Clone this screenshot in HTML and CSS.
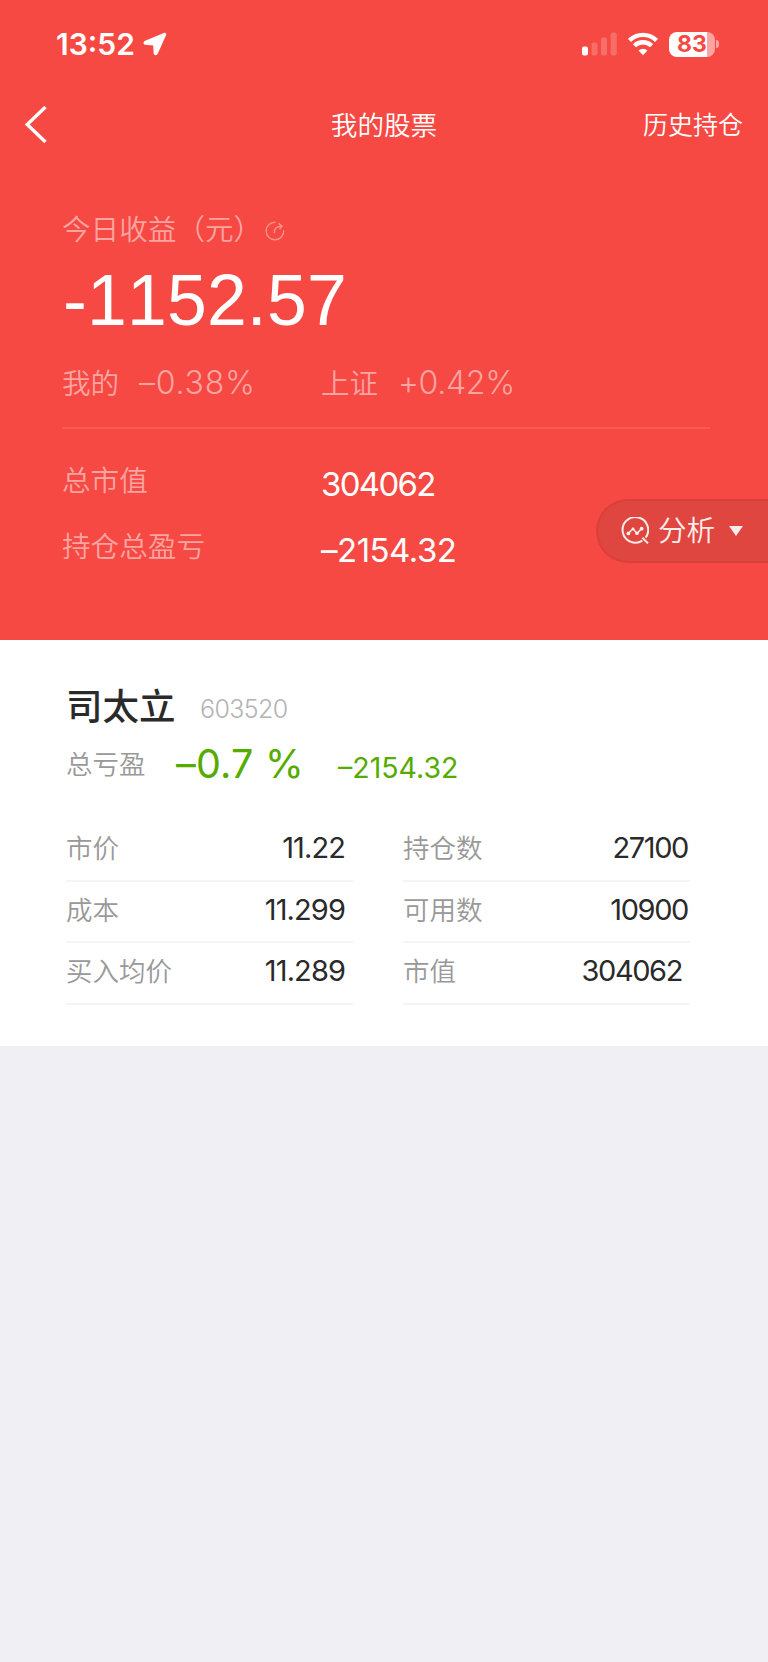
FILE: index.html
```html
<!DOCTYPE html>
<html lang="zh-CN">
<head>
  <meta charset="UTF-8">
  <title>我的股票</title>
  <link rel="stylesheet" href="styles.css">
</head>
<body>
  <div class="top">
    <div class="status-bar">
      <span class="time">13:52</span>
      <svg class="location" width="24" height="24" viewBox="0 0 24 24">
        <path d="M21.8 1.6 L1.9 9.9 Q1 10.5 1.8 11.8 L11 12.6 L11.6 21.6 Q12.6 23.2 13.8 21.7 L22.4 2.4 Z" fill="#fff" stroke="#fff" stroke-width="1.8" stroke-linejoin="round"/>
      </svg>
      <div class="status-icons">
        <svg class="signal" width="36" height="24" viewBox="0 0 36 24" fill="#fff">
          <rect x="0" y="14.5" width="6" height="9" rx="2"/>
          <rect x="9.5" y="10.5" width="6" height="13" rx="2" opacity=".2"/>
          <rect x="19" y="5.5" width="6" height="18" rx="2" opacity=".2"/>
          <rect x="28.7" y="0.5" width="6" height="23" rx="2" opacity=".2"/>
        </svg>
        <svg class="wifi" width="30" height="24" viewBox="0 0 30 24" fill="none" stroke="#fff" stroke-width="4.4">
          <path d="M1.5 8.4 A19.2 19.2 0 0 1 28.5 8.4"/>
          <path d="M6.4 13.8 A12.2 12.2 0 0 1 23.6 13.8"/>
          <path d="M15 23.2 L10.5 18.6 Q15 14.8 19.5 18.6 Z" fill="#fff" stroke="none"/>
        </svg>
        <div class="battery"><span>83</span></div>
        <div class="battery-cap"></div>
      </div>
    </div>

    <div class="nav">
      <svg class="back" width="24" height="38" viewBox="0 0 24 38">
        <path d="M21.5 1 L3.2 18.5 L21.5 36" fill="none" stroke="#fff" stroke-width="3.4"/>
      </svg>
      <h1>我的股票</h1>
      <a class="history">历史持仓</a>
    </div>

    <div class="profit">
      <div class="profit-title">
        <span>今日收益（元）</span>
        <svg width="20" height="20" viewBox="0 0 20 20" fill="none" stroke="#fff" stroke-width="1.4" opacity=".4">
          <path d="M10.5 1.2 A8.8 8.8 0 1 0 18.7 9.2"/>
          <path d="M9.4 12.2 C8.8 7.6 11.4 5.4 16.6 5.3"/>
          <path d="M13.6 2.4 L17 5.2 L14.6 8.2"/>
        </svg>
      </div>
      <div class="profit-value">-1152.57</div>
      <div class="compare">
        <div class="compare-item"><span>我的</span><b class="minus">–0.38%</b></div>
        <div class="compare-item"><span>上证</span><b>+0.42%</b></div>
      </div>
      <div class="total">
        <span>总市值</span><b>304062</b>
      </div>
      <div class="total">
        <span>持仓总盈亏</span><b class="minus">–2154.32</b>
      </div>
    </div>

    <div class="analysis">
      <svg width="28" height="28" viewBox="0 0 28 28" fill="none" stroke="#fdeceb" stroke-width="2">
        <path d="M21.4 23.6 A12.8 12.8 0 1 1 24.6 20.6"/>
        <path d="M21.4 20.8 L27 26.4"/>
        <path d="M7.4 16.4 L12 11.6 L16 16.6 L20.6 11.6" stroke-width="1.5"/>
        <g fill="#fdeceb" stroke="none">
          <circle cx="7.4" cy="16.4" r="1.9"/>
          <circle cx="12" cy="12" r="1.4"/>
          <circle cx="16" cy="16.3" r="1.8"/>
          <circle cx="20.6" cy="11.7" r="1.9"/>
        </g>
      </svg>
      <span>分析</span>
      <i class="arrow"></i>
    </div>
  </div>

  <div class="stock">
    <div class="stock-name">
      <h2>司太立</h2>
      <span class="code">603520</span>
    </div>
    <div class="stock-profit">
      <span class="label">总亏盈</span>
      <span class="percent">–0.7 %</span>
      <span class="amount">–2154.32</span>
    </div>
    <div class="detail">
      <div class="cell"><span>市价</span><b>11.22</b></div>
      <div class="cell right"><span>持仓数</span><b>27100</b></div>
      <div class="cell"><span>成本</span><b>11.299</b></div>
      <div class="cell right"><span>可用数</span><b>10900</b></div>
      <div class="cell"><span>买入均价</span><b>11.289</b></div>
      <div class="cell right last"><span>市值</span><b>304062</b></div>
    </div>
  </div>
</body>
</html>
```
FILE: styles.css
```css
* {
  box-sizing: border-box;
}
body {
  margin: 0;
  min-height: 1662px;
  background-color: #efeff4;
  font-family: Inter, "Noto Sans CJK SC", sans-serif;
  font-weight: 350;
}
h1, h2 {
  margin: 0;
  font-weight: 350;
}
b {
  font-weight: 400;
}
svg {
  display: block;
  flex: none;
}
.top {
  position: relative;
  height: 640px;
  background-color: #f64943;
  color: #fff;
}

/* status bar */
.status-bar {
  display: flex;
  align-items: center;
  height: 88px;
  padding: 0 49px 0 56px;
}
.time {
  width: 87px;
  font-size: 30px;
  font-weight: 600;
  line-height: 40px;
}
.status-icons {
  display: flex;
  align-items: center;
  margin-left: auto;
}
.wifi {
  margin-left: 10px;
  margin-right: 11px;
}
.battery {
  width: 46px;
  height: 25px;
  border-radius: 8px;
  background: linear-gradient(to right, #fff 38px, #fba4a1 38px);
  color: #f64943;
  font-size: 23px;
  font-weight: 700;
  line-height: 25px;
  text-align: center;
}
.battery-cap {
  width: 3px;
  height: 8px;
  margin-left: 1px;
  border-radius: 0 3px 3px 0;
  background-color: #fba4a1;
}

/* nav */
.nav {
  display: grid;
  grid-template-columns: 1fr auto 1fr;
  align-items: center;
  height: 74px;
  padding: 0 25px 0 24px;
}
.nav h1 {
  padding-left: 1px;
  font-size: 26.6px;
  line-height: 40px;
}
.history {
  justify-self: end;
  font-size: 25px;
  line-height: 40px;
}

/* profit */
.profit {
  padding: 45px 58px 0 62px;
  font-size: 28.6px;
}
.profit-title {
  display: flex;
  align-items: center;
  height: 42px;
  padding-bottom: 2px;
  color: #fba4a1;
}
.profit-title svg {
  margin: 7px 0 0 3px;
}
.profit-value {
  height: 102px;
  padding-left: 1px;
  font-family: "Liberation Sans", Arial, sans-serif;
  font-size: 71.5px;
  font-weight: 400;
  font-kerning: none;
  letter-spacing: 0.2px;
  line-height: 102px;
}
.compare {
  display: flex;
  height: 78px;
  padding-top: 12px;
  border-bottom: 2px solid #f85b56;
  color: #fba4a1;
  line-height: 40px;
}
.compare-item {
  display: flex;
  width: 259px;
}
.compare-item span {
  width: 77px;
  padding-top: 1px;
}
.compare-item b {
  font-size: 32px;
  font-weight: 350;
  letter-spacing: -0.3px;
}
.compare-item .minus {
  letter-spacing: 0.8px;
}
.total {
  display: flex;
  height: 66px;
  line-height: 40px;
}
.compare + .total {
  margin-top: 31px;
}
.total span {
  width: 259px;
  padding-top: 1px;
  color: #fba4a1;
}
.total b {
  padding-top: 4px;
  font-size: 33px;
  letter-spacing: -1.7px;
}
.total .minus {
  letter-spacing: -0.5px;
}

/* floating button */
.analysis {
  position: absolute;
  top: 499px;
  right: 0;
  display: flex;
  align-items: center;
  width: 172px;
  height: 64px;
  padding-left: 23px;
  border: 2px solid #d9403b;
  border-right: 0;
  border-radius: 32px 0 0 32px;
  background-color: #df463f;
  color: #fdeceb;
  font-size: 28.6px;
  line-height: 40px;
}
.analysis span {
  margin-left: 9px;
}
.arrow {
  margin-left: 14px;
  border: 7px solid transparent;
  border-top: 10px solid #fdeceb;
  border-bottom: 0;
}

/* stock card */
.stock {
  height: 406px;
  padding: 42px 78px 0 66px;
  background-color: #fff;
}
.stock-name {
  display: flex;
  height: 50px;
  line-height: 50px;
}
.stock-name h2 {
  width: 134px;
  color: #2a2a2a;
  font-size: 36.5px;
  font-weight: 500;
}
.code {
  padding-top: 2px;
  color: #b3b3b3;
  font-size: 25px;
  letter-spacing: -0.6px;
}
.stock-profit {
  display: flex;
  height: 88px;
  padding-top: 7px;
  color: #56ab00;
  line-height: 50px;
}
.stock-profit .label {
  width: 110px;
  color: #999;
  font-size: 26.5px;
}
.percent {
  width: 162px;
  font-size: 39.5px;
  font-weight: 400;
  letter-spacing: 0.2px;
}
.amount {
  padding-top: 4px;
  font-size: 28.5px;
  font-weight: 400;
}
.detail {
  display: grid;
  grid-template-columns: 287px 287px;
  column-gap: 50px;
}
.cell {
  display: flex;
  justify-content: space-between;
  height: 61.5px;
  padding: 8px 8px 0 0;
  border-bottom: 2px solid #f5f5f5;
  line-height: 40px;
}
.cell span {
  color: #999;
  font-size: 26.5px;
}
.cell b {
  color: #2a2a2a;
  font-size: 29px;
  letter-spacing: -0.9px;
}
.cell.right {
  padding-right: 2px;
}
.cell.right b {
  letter-spacing: -1.4px;
}
.cell.last {
  padding-right: 8px;
}
```
